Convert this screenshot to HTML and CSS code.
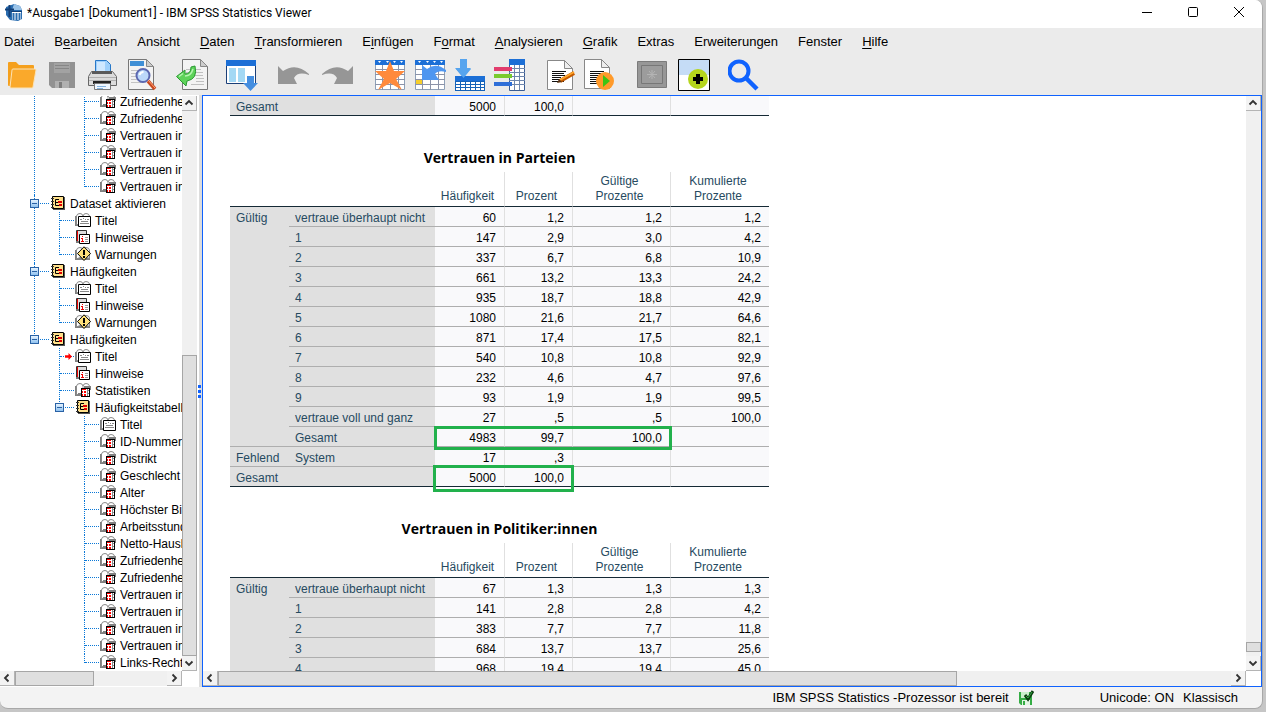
FILE: index.html
```
<!DOCTYPE html>
<html lang="de">
<head>
  <meta charset="UTF-8">
  <title>*Ausgabe1 [Dokument1] - IBM SPSS Statistics Viewer</title>
  <link rel="stylesheet" href="styles.css">
</head>
<body>
  <!-- icons used more than once -->
  <svg class="sprite" aria-hidden="true">
    <symbol id="i-log" viewBox="0 0 16 16">
      <path d="M3 2h12v13H3z" fill="#555"/>
      <path d="M2.500 1.500h11v12h-11z" fill="#ffe08a" stroke="#000"/>
      <path d="M1 3.500h3M1 6.500h3M1 9.500h3M1 12.500h3" stroke="#333"/>
      <path d="M9 4.500H5.500v6H9M5.500 7.500H8" fill="none" stroke="#000"/>
      <path d="M8 6h4v2H8zM9 9h3v2H9z" fill="#e00000"/>
    </symbol>
    <symbol id="i-book" viewBox="0 0 16 16">
      <path d="M0 4h2v10H0zM1 12h14v2H1z" fill="#808080"/>
      <path d="M1.500 4Q2 1.500 5 1.500Q7.500 1.500 8 4Q8.500 1.500 11 1.500Q14 1.500 14.500 4V12H8Q5 10.500 1.500 13z" fill="#fff" stroke="#8a8a8a"/>
      <path d="M8 4v8" stroke="#999"/>
    </symbol>
    <symbol id="i-table" viewBox="0 0 16 16">
      <use href="#i-book"/>
      <path d="M9 4h7v4H9zM3 11h4v3H3z" fill="#808080"/>
      <path d="M6 6h9v9H6z" fill="#000"/>
      <path d="M7 7h7v7H7z" fill="#fff"/>
      <path d="M7 7h4v1H7zM7 9h1v2H7zM9 9h2v2H9zM7 12h1v2H7zM9 12h2v2H9z" fill="#f00"/>
      <path d="M12 7h1v7h-1zM12 8h2v1h-2zM12 11h2v1h-2z" fill="#888"/>
    </symbol>
    <symbol id="i-title" viewBox="0 0 16 16">
      <use href="#i-book"/>
      <path d="M3.500 4.500h12v10h-12z" fill="#fff" stroke="#000"/>
      <path d="M5 7.500h2M8 6.500h1M10 7.500h1M12 7.500h2M6 9.500h7M5 11.500h9" stroke="#888"/>
    </symbol>
    <symbol id="i-note" viewBox="0 0 16 16">
      <path d="M1.500 1.500h10v11h-10z" fill="#ddd" stroke="#333"/>
      <path d="M2 2h1v10H2z" fill="#e00"/>
      <path d="M1 12h3v2H1z" fill="#777"/>
      <path d="M4.500 5.500h10v9h-10z" fill="#fff" stroke="#000"/>
      <path d="M7 7h1v1H7zM6 9h2v3h1v1H6v-1h1v-2H6z" fill="#e00"/>
      <path d="M10 8.500h3M10 10.500h3M10 12.500h3" stroke="#999"/>
    </symbol>
    <symbol id="i-warn" viewBox="0 0 16 16">
      <use href="#i-book"/>
      <path d="M9 .8L15.500 7.500L9 14.500L2.500 7.500z" fill="#ffe07a" stroke="#000"/>
      <path d="M8 4h2v5H8zM8 10h2v2H8z"/>
    </symbol>
    <symbol id="i-sheet" viewBox="0 0 32 32">
      <path d="M1.500 1.500h29v29h-29z" fill="#fff" stroke="#8da0b8"/>
      <path d="M1 1h30v5H1z" fill="#1c6fd6"/>
      <path d="M4 2h3l-1.500 2zM12 2h3l-1.500 2zM19 2h3l-1.500 2zM26 2h3l-1.500 2z" fill="#fff"/>
      <path d="M8.500 6v25M16.500 6v25M24.500 6v25M1 10.500h30M1 15.500h30M1 20.500h30M1 25.500h30" stroke="#8c93a8"/>
    </symbol>
    <symbol id="i-page" viewBox="0 0 32 32">
      <path d="M3.500 1.500h17l8 8v21h-25z" fill="#fff" stroke="#888"/>
      <path d="M20.500 1.500v8h8z" fill="#eee" stroke="#888"/>
    </symbol>
    <symbol id="i-up" viewBox="0 0 12 12"><path d="M2.500 7.500L6 4l3.500 3.500" fill="none" stroke="#333" stroke-width="1.800"/></symbol>
    <symbol id="i-down" viewBox="0 0 12 12"><path d="M2.500 4.500L6 8l3.500-3.500" fill="none" stroke="#333" stroke-width="1.800"/></symbol>
    <symbol id="i-left" viewBox="0 0 12 12"><path d="M7.500 2.500L4 6l3.500 3.500" fill="none" stroke="#333" stroke-width="1.800"/></symbol>
    <symbol id="i-right" viewBox="0 0 12 12"><path d="M4.500 2.500L8 6l-3.500 3.500" fill="none" stroke="#333" stroke-width="1.800"/></symbol>
  </svg>

  <div class="window">
    <header class="titlebar">
      <svg class="app-icon" viewBox="0 0 18 18">
        <path d="M1 3l8-3 6 2 2 4v9l-4 2-8-1-4-5z" fill="#2a6db0"/>
        <path d="M9 0l6 2 2 4H7z" fill="#9cc4e8"/>
        <path d="M0 5.500h9M4.500 1v12" stroke="#123f77" stroke-width="2"/>
        <path d="M7 8h9v8H7z" fill="#fff"/>
        <path d="M6 7.500h11" stroke="#123f77"/>
        <path d="M8.500 9v7M11.500 9v7M14.500 9v7" stroke="#2a6db0" stroke-width="2"/>
      </svg>
      <h1>*Ausgabe1 [Dokument1] - IBM SPSS Statistics Viewer</h1>
      <div class="window-controls">
        <button aria-label="Minimieren"><svg viewBox="0 0 12 12"><path d="M1 6.500h10" stroke="#000"/></svg></button>
        <button aria-label="Maximieren"><svg viewBox="0 0 12 12"><rect x="1.500" y="1.500" width="9" height="9" rx="1" fill="none" stroke="#000"/></svg></button>
        <button aria-label="Schließen"><svg viewBox="0 0 12 12"><path d="M1 1l10 10M11 1L1 11" stroke="#000"/></svg></button>
      </div>
    </header>

    <nav class="menubar">
      <a href="#">Datei</a>
      <a href="#">B<u>e</u>arbeiten</a>
      <a href="#">Ansicht</a>
      <a href="#"><u>D</u>aten</a>
      <a href="#"><u>T</u>ransformieren</a>
      <a href="#">E<u>i</u>nfügen</a>
      <a href="#">F<u>o</u>rmat</a>
      <a href="#"><u>A</u>nalysieren</a>
      <a href="#"><u>G</u>rafik</a>
      <a href="#">Extras</a>
      <a href="#">Erweiterungen</a>
      <a href="#">Fenster</a>
      <a href="#"><u>H</u>ilfe</a>
    </nav>

    <div class="toolbar">
      <div class="group">
        <button aria-label="Öffnen"><svg viewBox="0 0 32 32">
          <path d="M2 4q0-1 1-1h7l3 3h14q1 0 1 1v4H8L4 27H3q-1 0-1-1z" fill="#f5a01d"/>
          <path d="M6 11q0-1 1-1h22q1 0 1 1l-3 17q0 1-1 1H5q-1 0-1-1z" fill="#faa92b" stroke="#fbe3b8"/>
        </svg></button>
        <button aria-label="Speichern"><svg viewBox="0 0 32 32">
          <path d="M3 3h26v26H6l-3-3z" fill="#929292"/>
          <path d="M8 4h16v10H8z" fill="#a2a2a2"/>
          <path d="M9 6.500h14M9 9.500h14" stroke="#868686"/>
          <path d="M9 22h14v7H9z" fill="#b0b0b0"/>
          <path d="M13 23h3v6h-3z" fill="#7d7d7d"/>
        </svg></button>
        <button aria-label="Drucken"><svg viewBox="0 0 32 32">
          <path d="M9.500 14V1.500h11l4 4V14z" fill="#9fd0fb" stroke="#2878c8"/>
          <path d="M11 3h8v9h-8z" fill="#cfe8ff"/>
          <path d="M5.500 12.500h21l4 5v9h-28v-9z" fill="#dcdcdc" stroke="#666"/>
          <path d="M6 12h20v3H6z" fill="#5a5a5a"/>
          <path d="M3 18.500h27M3 21.500h27" stroke="#b0b0b0"/>
          <path d="M7 22h18v3H7z" fill="#222"/>
          <path d="M8.500 24.500h16v6h-16z" fill="#eef6ff" stroke="#777"/>
          <path d="M11 27.500h9M11 29.500h6" stroke="#83b3e0"/>
        </svg></button>
        <button aria-label="Seitenansicht"><svg viewBox="0 0 32 32">
          <path d="M2.500.5h18l7 7v23h-25z" fill="#f3f3f3" stroke="#777"/>
          <path d="M20.500.5v7h7z" fill="#ccc" stroke="#888"/>
          <path d="M4 2h14v5H4z" fill="#3f8fd6"/>
          <path d="M5 11.500h16M5 14.500h16M5 17.500h16M5 20.500h12M5 23.500h12" stroke="#c4c4c4"/>
          <circle cx="17" cy="16.500" r="6.500" fill="#bcd8fa" stroke="#5c68b0" stroke-width="2"/>
          <path d="M13.500 16q1-3 4-3" stroke="#fff" stroke-width="2" fill="none"/>
          <path d="M22 22l7 8" stroke="#c9481f" stroke-width="3.500"/>
          <path d="M22 21l7 8" stroke="#ffa47a"/>
        </svg></button>
      </div>
      <div class="group">
        <button aria-label="Exportieren"><svg viewBox="0 0 32 32">
          <path d="M6.500.5h18l7 7v23h-25z" fill="#f3f3f3" stroke="#777"/>
          <path d="M24.500.5v7h7z" fill="#ccc" stroke="#888"/>
          <path d="M10 10.500h15M10 13.500h17M10 16.500h17M20 19.500h8M20 22.500h8M15 25.500h13" stroke="#c0c0c0"/>
          <path d="M.5 17.500L9 11v4q6 0 6-7l4-1q3 13-8 15l-1 5z" fill="#5ed35a" stroke="#2b9a33"/>
          <path d="M3 17.500l4-3M9 17q6 0 8-7" fill="none" stroke="#b5f5b0" stroke-width="1.500"/>
        </svg></button>
      </div>
      <div class="group">
        <button aria-label="Zuletzt verwendete Dialogfelder"><svg viewBox="0 0 32 32">
          <path d="M.5 1.500h29v23H.5z" fill="#fff" stroke="#1b3f78"/>
          <path d="M0 1h30v6H0z" fill="#1c6fd6"/>
          <path d="M3 9h7v14H3zM12 9h7v14h-7z" fill="#a3d8f4"/>
          <path d="M21 17h7v7h4l-7.500 8-7.500-8h4z" fill="#448ee0"/>
        </svg></button>
      </div>
      <div class="group">
        <button class="wide" aria-label="Rückgängig"><svg viewBox="0 0 36 32">
          <path d="M2 7l5 5q13-9 26 3v1q-11-4-15 3l3 6H2z" fill="#969696"/>
        </svg></button>
        <button class="wide" aria-label="Wiederholen"><svg viewBox="0 0 36 32">
          <path d="M33 7l-5 5q-13-9-26 3v1q11-4 15 3l-3 6h19z" fill="#969696"/>
        </svg></button>
      </div>
      <div class="group">
        <button aria-label="Gehe zu Fall"><svg viewBox="0 0 32 32">
          <use href="#i-sheet"/>
          <path d="M16 2l4 10h11l-9 8 6 11-12-7-12 7 6-11-9-8h11z" fill="#ff8a3c"/>
        </svg></button>
        <button aria-label="Gehe zu Variable"><svg viewBox="0 0 32 32">
          <use href="#i-sheet"/>
          <path d="M2 21h6v4H2z" fill="#f7cf2b"/>
          <path d="M8 6l5 4q9-7 19 1v2q-8-2-11 2l4 6H8z" fill="#4e96f0"/>
        </svg></button>
        <button aria-label="Fall einfügen"><svg viewBox="0 0 32 32">
          <path d="M6 0h7v9h4L9.500 19 1 9h5z" fill="#56a4ee"/>
          <path d="M1 17h30v15H1z" fill="#1562b8"/>
          <path d="M1 17h30v5H1z" fill="#1c6fd6"/>
          <path d="M9.500 19L2 10h15z" fill="#56a4ee"/>
          <path d="M2 23h28v8H2z" fill="#fff"/>
          <path d="M6.500 22v9M11.500 22v9M16.500 22v9M21.500 22v9M26.500 22v9M2 25.500h28M2 28.500h28" stroke="#1562b8"/>
        </svg></button>
        <button aria-label="Variablen"><svg viewBox="0 0 32 32">
          <path d="M15.500 2.500h15v29h-15z" fill="#fff" stroke="#3a5d94"/>
          <path d="M15 0h16v6H15z" fill="#1c6fd6"/>
          <path d="M20.500 6v25M25.500 6v25M15 9.500h16M15 13.500h16M15 17.500h16M15 21.500h16M15 25.500h16" stroke="#6f86ac"/>
          <path d="M0 8h18v4H0z" fill="#e23d6d"/>
          <path d="M0 15h18v4H0z" fill="#7acb2d"/>
          <path d="M0 23h18v4H0z" fill="#2f6fd8"/>
        </svg></button>
      </div>
      <div class="group">
        <button aria-label="Syntax bearbeiten"><svg viewBox="0 0 32 32">
          <use href="#i-page"/>
          <path d="M8 12.500h14M8 14.500h12M8 16.500h13M8 18.500h9M8 20.500h8M8 22.500h12" stroke="#111"/>
          <path d="M16 22l14-8" stroke="#c55a00" stroke-width="4"/>
          <path d="M16 21l14-8" stroke="#ffa62b" stroke-width="2"/>
          <path d="M13 24l2-4 3 3z" fill="#5b3413"/>
        </svg></button>
        <button aria-label="Syntax ausführen"><svg viewBox="0 0 32 32">
          <use href="#i-page" x="-3" y="-1"/>
          <path d="M6 12.500h14M6 14.500h12M6 16.500h13M6 18.500h9M6 20.500h8M6 22.500h9M6 24.500h9" stroke="#111"/>
          <circle cx="21" cy="22" r="9" fill="#ff9a2a"/>
          <path d="M19 16l7 6-7 6z" fill="#3dc414"/>
        </svg></button>
      </div>
      <div class="group">
        <button class="wide" aria-label="Ausgabe festlegen"><svg viewBox="0 0 36 32">
          <path d="M3.500 2.500h29v26h-29z" fill="#979797" stroke="#7b7b7b"/>
          <path d="M7.500 6.500h21v18h-21z" fill="#9c9c9c" stroke="#777"/>
          <path d="M18 11v9M13 15.500h10M15 12l6 7M21 12l-6 7" stroke="#b4b4b4"/>
        </svg></button>
        <button aria-label="Erweiterung hinzufügen"><svg viewBox="0 0 32 32">
          <path d="M.5.5h31v31H.5z" fill="#fff" stroke="#000"/>
          <path d="M1 1h30v15H1z" fill="#c5dcf6"/>
          <circle cx="20" cy="20" r="10" fill="#b5d51c"/>
          <path d="M20 15v10M15 20h10" stroke="#000" stroke-width="4"/>
        </svg></button>
      </div>
      <div class="group">
        <button aria-label="Suchen"><svg viewBox="0 0 32 32">
          <circle cx="11" cy="12" r="9.500" fill="none" stroke="#0f62fe" stroke-width="4"/>
          <path d="M18 19l11 11" stroke="#0f62fe" stroke-width="4.500"/>
        </svg></button>
      </div>
    </div>

    <main class="workspace">
      <aside class="outline">
        <div class="tree">
          <ul>
            <li>
              <ul>
                <li class="closed">
                  <ul>
                    <li><span class="row"><svg><use href="#i-table"/></svg>Zufriedenheit Leben</span></li>
                    <li><span class="row"><svg><use href="#i-table"/></svg>Zufriedenheit Demokratie</span></li>
                    <li><span class="row"><svg><use href="#i-table"/></svg>Vertrauen in Parlament</span></li>
                    <li><span class="row"><svg><use href="#i-table"/></svg>Vertrauen in Justiz</span></li>
                    <li><span class="row"><svg><use href="#i-table"/></svg>Vertrauen in Parteien</span></li>
                    <li><span class="row"><svg><use href="#i-table"/></svg>Vertrauen in Politiker:innen</span></li>
                  </ul>
                </li>
              </ul>
            </li>
            <li>
              <span class="row"><button class="toggle" aria-label="Zuklappen"></button><svg><use href="#i-log"/></svg>Dataset aktivieren</span>
              <ul>
                <li><span class="row"><svg><use href="#i-title"/></svg>Titel</span></li>
                <li><span class="row"><svg><use href="#i-note"/></svg>Hinweise</span></li>
                <li><span class="row"><svg><use href="#i-warn"/></svg>Warnungen</span></li>
              </ul>
            </li>
            <li>
              <span class="row"><button class="toggle" aria-label="Zuklappen"></button><svg><use href="#i-log"/></svg>Häufigkeiten</span>
              <ul>
                <li><span class="row"><svg><use href="#i-title"/></svg>Titel</span></li>
                <li><span class="row"><svg><use href="#i-note"/></svg>Hinweise</span></li>
                <li><span class="row"><svg><use href="#i-warn"/></svg>Warnungen</span></li>
              </ul>
            </li>
            <li>
              <span class="row"><button class="toggle" aria-label="Zuklappen"></button><svg><use href="#i-log"/></svg>Häufigkeiten</span>
              <ul>
                <li><span class="row current"><svg><use href="#i-title"/></svg>Titel</span></li>
                <li><span class="row"><svg><use href="#i-note"/></svg>Hinweise</span></li>
                <li><span class="row"><svg><use href="#i-table"/></svg>Statistiken</span></li>
                <li>
                  <span class="row"><button class="toggle" aria-label="Zuklappen"></button><svg><use href="#i-log"/></svg>Häufigkeitstabelle</span>
                  <ul>
                    <li><span class="row"><svg><use href="#i-title"/></svg>Titel</span></li>
                    <li><span class="row"><svg><use href="#i-table"/></svg>ID-Nummer</span></li>
                    <li><span class="row"><svg><use href="#i-table"/></svg>Distrikt</span></li>
                    <li><span class="row"><svg><use href="#i-table"/></svg>Geschlecht</span></li>
                    <li><span class="row"><svg><use href="#i-table"/></svg>Alter</span></li>
                    <li><span class="row"><svg><use href="#i-table"/></svg>Höchster Bildungsabschluss</span></li>
                    <li><span class="row"><svg><use href="#i-table"/></svg>Arbeitsstunden</span></li>
                    <li><span class="row"><svg><use href="#i-table"/></svg>Netto-Haushaltseinkommen</span></li>
                    <li><span class="row"><svg><use href="#i-table"/></svg>Zufriedenheit Leben</span></li>
                    <li><span class="row"><svg><use href="#i-table"/></svg>Zufriedenheit Demokratie</span></li>
                    <li><span class="row"><svg><use href="#i-table"/></svg>Vertrauen in Parlament</span></li>
                    <li><span class="row"><svg><use href="#i-table"/></svg>Vertrauen in Justiz</span></li>
                    <li><span class="row"><svg><use href="#i-table"/></svg>Vertrauen in Parteien</span></li>
                    <li><span class="row"><svg><use href="#i-table"/></svg>Vertrauen in Politiker:innen</span></li>
                    <li><span class="row"><svg><use href="#i-table"/></svg>Links-Rechts-Skala</span></li>
                  </ul>
                </li>
              </ul>
            </li>
          </ul>
        </div>
        <div class="scroll vertical">
          <button aria-label="Nach oben"><svg><use href="#i-up"/></svg></button>
          <div class="track tree-v"><span class="thumb"></span></div>
          <button aria-label="Nach unten"><svg><use href="#i-down"/></svg></button>
        </div>
        <div class="scroll horizontal">
          <button aria-label="Nach links"><svg><use href="#i-left"/></svg></button>
          <div class="track tree-h"><span class="thumb"></span></div>
          <button aria-label="Nach rechts"><svg><use href="#i-right"/></svg></button>
        </div>
      </aside>

      <div class="splitter"><span class="grip"></span></div>

      <section class="viewer">
        <div class="document">
          <table class="pivot">
            <colgroup><col class="c-group"><col class="c-label"><col class="c-n"><col class="c-pct"><col class="c-wide"><col class="c-wide"></colgroup>
            <tbody>
              <tr class="last"><th colspan="2">Gesamt</th><td>5000</td><td>100,0</td><td></td><td></td></tr>
            </tbody>
          </table>

          <div class="marked">
            <table class="pivot">
              <caption>Vertrauen in Parteien</caption>
              <colgroup><col class="c-group"><col class="c-label"><col class="c-n"><col class="c-pct"><col class="c-wide"><col class="c-wide"></colgroup>
              <thead>
                <tr><td colspan="2"></td><th>Häufigkeit</th><th>Prozent</th><th>Gültige Prozente</th><th>Kumulierte Prozente</th></tr>
              </thead>
              <tbody>
                <tr><th rowspan="12">Gültig</th><th>vertraue überhaupt nicht</th><td>60</td><td>1,2</td><td>1,2</td><td>1,2</td></tr>
                <tr><th>1</th><td>147</td><td>2,9</td><td>3,0</td><td>4,2</td></tr>
                <tr><th>2</th><td>337</td><td>6,7</td><td>6,8</td><td>10,9</td></tr>
                <tr><th>3</th><td>661</td><td>13,2</td><td>13,3</td><td>24,2</td></tr>
                <tr><th>4</th><td>935</td><td>18,7</td><td>18,8</td><td>42,9</td></tr>
                <tr><th>5</th><td>1080</td><td>21,6</td><td>21,7</td><td>64,6</td></tr>
                <tr><th>6</th><td>871</td><td>17,4</td><td>17,5</td><td>82,1</td></tr>
                <tr><th>7</th><td>540</td><td>10,8</td><td>10,8</td><td>92,9</td></tr>
                <tr><th>8</th><td>232</td><td>4,6</td><td>4,7</td><td>97,6</td></tr>
                <tr><th>9</th><td>93</td><td>1,9</td><td>1,9</td><td>99,5</td></tr>
                <tr><th>vertraue voll und ganz</th><td>27</td><td>,5</td><td>,5</td><td>100,0</td></tr>
                <tr><th>Gesamt</th><td>4983</td><td>99,7</td><td>100,0</td><td></td></tr>
                <tr><th>Fehlend</th><th>System</th><td>17</td><td>,3</td><td></td><td></td></tr>
                <tr class="last"><th colspan="2">Gesamt</th><td>5000</td><td>100,0</td><td></td><td></td></tr>
              </tbody>
            </table>
            <span class="mark mark-valid"></span>
            <span class="mark mark-total"></span>
          </div>

          <table class="pivot">
            <caption>Vertrauen in Politiker:innen</caption>
            <colgroup><col class="c-group"><col class="c-label"><col class="c-n"><col class="c-pct"><col class="c-wide"><col class="c-wide"></colgroup>
            <thead>
              <tr><td colspan="2"></td><th>Häufigkeit</th><th>Prozent</th><th>Gültige Prozente</th><th>Kumulierte Prozente</th></tr>
            </thead>
            <tbody>
              <tr><th rowspan="5">Gültig</th><th>vertraue überhaupt nicht</th><td>67</td><td>1,3</td><td>1,3</td><td>1,3</td></tr>
              <tr><th>1</th><td>141</td><td>2,8</td><td>2,8</td><td>4,2</td></tr>
              <tr><th>2</th><td>383</td><td>7,7</td><td>7,7</td><td>11,8</td></tr>
              <tr><th>3</th><td>684</td><td>13,7</td><td>13,7</td><td>25,6</td></tr>
              <tr><th>4</th><td>968</td><td>19,4</td><td>19,4</td><td>45,0</td></tr>
            </tbody>
          </table>
        </div>
        <div class="scroll vertical">
          <button aria-label="Nach oben"><svg><use href="#i-up"/></svg></button>
          <div class="track doc-v"><span class="thumb"></span></div>
          <button aria-label="Nach unten"><svg><use href="#i-down"/></svg></button>
        </div>
        <div class="scroll horizontal">
          <button aria-label="Nach links"><svg><use href="#i-left"/></svg></button>
          <div class="track doc-h"><span class="thumb"></span></div>
          <button aria-label="Nach rechts"><svg><use href="#i-right"/></svg></button>
        </div>
      </section>
    </main>

    <footer class="statusbar">
      <span>IBM SPSS Statistics -Prozessor ist bereit</span>
      <svg viewBox="0 0 16 16">
        <path d="M1 2h13v13H3l-2-2z" fill="#35ad45"/>
        <path d="M3 2h8v6H3z" fill="#c9efcb"/>
        <path d="M4 10h8v5H4z" fill="#e3f6e3"/>
        <path d="M5 11h2v4H5z" fill="#35ad45"/>
        <path d="M7 5l3 4 5-8" fill="none" stroke="#0b3d10" stroke-width="3"/>
        <path d="M8 6l2 2 4-6" fill="none" stroke="#3a4"/>
      </svg>
      <span class="unicode">Unicode: ON</span>
      <span>Klassisch</span>
    </footer>
  </div>
</body>
</html>
```

FILE: styles.css
```
* {
  box-sizing: border-box;
}

body {
  margin: 0;
  height: 100vh;
  padding: 0 3px 3px 0;
  background: #c6c6c6;
  color: #000;
  font-family: "Liberation Sans", Arial, sans-serif;
  font-size: 12px;
  overflow: hidden;
}

button {
  margin: 0;
  padding: 0;
  border: none;
  background: none;
}

.sprite {
  position: absolute;
  width: 0;
  height: 0;
}

.window {
  height: 100%;
  display: flex;
  flex-direction: column;
  background: #f3f3f3;
  border: solid #a8a8a8;
  border-width: 0 1px 1px 0;
  border-radius: 0 8px 8px 8px;
  overflow: hidden;
}

/* title bar */
.titlebar {
  flex: none;
  height: 28px;
  display: flex;
  align-items: center;
  padding-left: 5px;
  padding-bottom: 2px;
  background: #fff;
}

.app-icon {
  width: 18px;
  height: 18px;
  margin-right: 4px;
}

.titlebar h1 {
  margin: 0;
  font-family: Roboto, "Segoe UI", sans-serif;
  font-size: 12px;
  font-weight: normal;
}

.window-controls {
  display: flex;
  margin-left: auto;
}

.window-controls button {
  width: 46px;
  height: 24px;
}

.window-controls svg {
  width: 12px;
  height: 12px;
}

/* menu and toolbar */
.menubar {
  flex: none;
  height: 27px;
  display: flex;
  align-items: center;
  gap: 20px;
  padding-left: 4px;
  background: #ebebeb;
  font-size: 13px;
}

.menubar a {
  color: #000;
  text-decoration: none;
}

.menubar u {
  text-underline-offset: 2px;
}

.toolbar {
  flex: none;
  height: 40px;
  display: flex;
  align-items: center;
  gap: 18px;
  padding-left: 6px;
  background: #ebebeb;
}

.group {
  display: flex;
  gap: 8px;
}

.group button {
  width: 32px;
  height: 32px;
}

.group .wide {
  width: 36px;
}

.group svg {
  display: block;
  width: 100%;
  height: 100%;
}

/* both panes: content with scroll bars round it */
.workspace {
  flex: 1;
  min-height: 0;
  display: flex;
  background: #fff;
}

.outline,
.viewer {
  display: grid;
  grid-template-columns: minmax(0, 1fr) 15px;
  grid-template-rows: minmax(0, 1fr) 15px;
}

.outline {
  flex: none;
  width: 197px;
  padding: 1px 0;
}

.scroll {
  display: flex;
  background: #f0f0f0;
}

.scroll.vertical {
  flex-direction: column;
}

.scroll button {
  flex: none;
  width: 15px;
  height: 15px;
  border: solid #b4b4b4;
  border-width: 0 1px 1px 0;
  background: #f3f3f3;
}

.scroll svg {
  display: block;
  width: 12px;
  height: 12px;
  margin: 1px;
}

.track {
  flex: 1;
  display: grid;
}

.thumb {
  background: #dfdfdf;
  border: 1px solid #a6a6a6;
}

.vertical .thumb {
  grid-row: 2;
}

.tree-v {
  grid-template-rows: 244fr 302fr;
}

.tree-h {
  grid-template-columns: 80fr 74fr;
}

.doc-v {
  grid-template-rows: 532fr 10fr 4fr;
}

.doc-h {
  grid-template-columns: 740fr 275fr;
}

/* outline tree */
.tree {
  overflow: hidden;
  padding-left: 34px;
}

.tree ul {
  list-style: none;
  margin: 0;
  padding: 0;
}

.tree ul ul {
  padding-left: 25px;
}

/* scrolled down a little, the top row is cut */
.tree > ul {
  margin-top: -3px;
}

.tree li {
  position: relative;
}

/* vertical guide, stops at the middle of the last row */
.tree li::before {
  content: "";
  position: absolute;
  left: 0;
  top: 0;
  bottom: 0;
  border-left: 1px dotted #0a78d7;
}

.tree li:last-child::before {
  bottom: auto;
  height: 9px;
}

.tree li.closed::before {
  display: none;
}

.row {
  position: relative;
  display: flex;
  align-items: center;
  gap: 4px;
  height: 17px;
  padding-left: 16px;
  white-space: nowrap;
}

.row::before {
  content: "";
  position: absolute;
  left: 1px;
  top: 8px;
  width: 14px;
  border-top: 1px dotted #0a78d7;
}

.row svg {
  flex: none;
  width: 16px;
  height: 16px;
  margin-bottom: 1px;
}

.row.current::after {
  content: "";
  position: absolute;
  left: 6px;
  top: 5px;
  width: 7px;
  height: 7px;
  background: #f00;
  clip-path: polygon(0 33%, 50% 33%, 50% 0, 100% 50%, 50% 100%, 50% 67%, 0 67%);
}

.toggle {
  position: absolute;
  left: -4px;
  top: 4px;
  width: 9px;
  height: 9px;
  border: 1px solid #2a62a5;
  background: linear-gradient(#2a62a5, #2a62a5) center / 5px 1px no-repeat, linear-gradient(#e6f3ff, #8fc2f0);
}

/* splitter */
.splitter {
  flex: none;
  width: 5px;
  display: flex;
  align-items: center;
  background: linear-gradient(to right, #fff 2px, #dcdcdc 2px);
}

.grip {
  width: 5px;
  height: 14px;
  background: radial-gradient(circle, #0f62fe 2px, transparent 2px) center top / 5px 5px;
}

/* output document */
.viewer {
  flex: 1;
  min-width: 0;
  border: 1px solid #0f62fe;
}

.document {
  overflow: hidden;
  padding-left: 27px;
}

.pivot {
  width: 539px;
  table-layout: fixed;
  border-collapse: separate;
  border-spacing: 0;
  line-height: 15px;
}

.pivot caption {
  padding: 32px 0 4px;
  font-family: "Open Sans", sans-serif;
  font-size: 14px;
  font-weight: bold;
  line-height: 20px;
}

.c-group {
  width: 59px;
}

.c-label {
  width: 146px;
}

.c-n {
  width: 70px;
}

.c-pct {
  width: 68px;
}

.c-wide {
  width: 98px;
}

.pivot th {
  color: #264a60;
  font-weight: normal;
}

.pivot thead tr {
  height: 35px;
}

.pivot thead th,
.pivot thead td {
  padding: 0 8px 2px 4px;
  border-bottom: 1px solid #152935;
  vertical-align: bottom;
}

.pivot thead th {
  border-right: 1px solid #e0e0e0;
}

.pivot tbody tr {
  height: 20px;
}

.pivot tbody th {
  padding: 4px 0 0 6px;
  background: #e0e0e0;
  border-bottom: 1px solid #aeaeae;
  text-align: left;
  vertical-align: top;
  white-space: nowrap;
}

.pivot tbody td {
  padding: 4px 8px 0 0;
  background: #f9f9fb;
  border-right: 1px solid #e0e0e0;
  border-bottom: 1px solid #aeaeae;
  text-align: right;
}

.pivot tr > :last-child {
  border-right: none;
}

.pivot .last th,
.pivot .last td {
  border-bottom-color: #152935;
}

.marked {
  position: relative;
}

.mark {
  position: absolute;
  border: 3px solid #22b14c;
}

.mark-valid {
  left: 204px;
  bottom: 37px;
  width: 238px;
  height: 24px;
}

.mark-total {
  left: 203px;
  bottom: -5px;
  width: 141px;
  height: 27px;
}

/* status bar */
.statusbar {
  flex: none;
  height: 21px;
  display: flex;
  align-items: center;
  justify-content: flex-end;
  gap: 9px;
  padding-right: 24px;
  font-size: 13px;
}

.statusbar svg {
  width: 16px;
  height: 16px;
}

.unicode {
  margin-left: 57px;
}
```
